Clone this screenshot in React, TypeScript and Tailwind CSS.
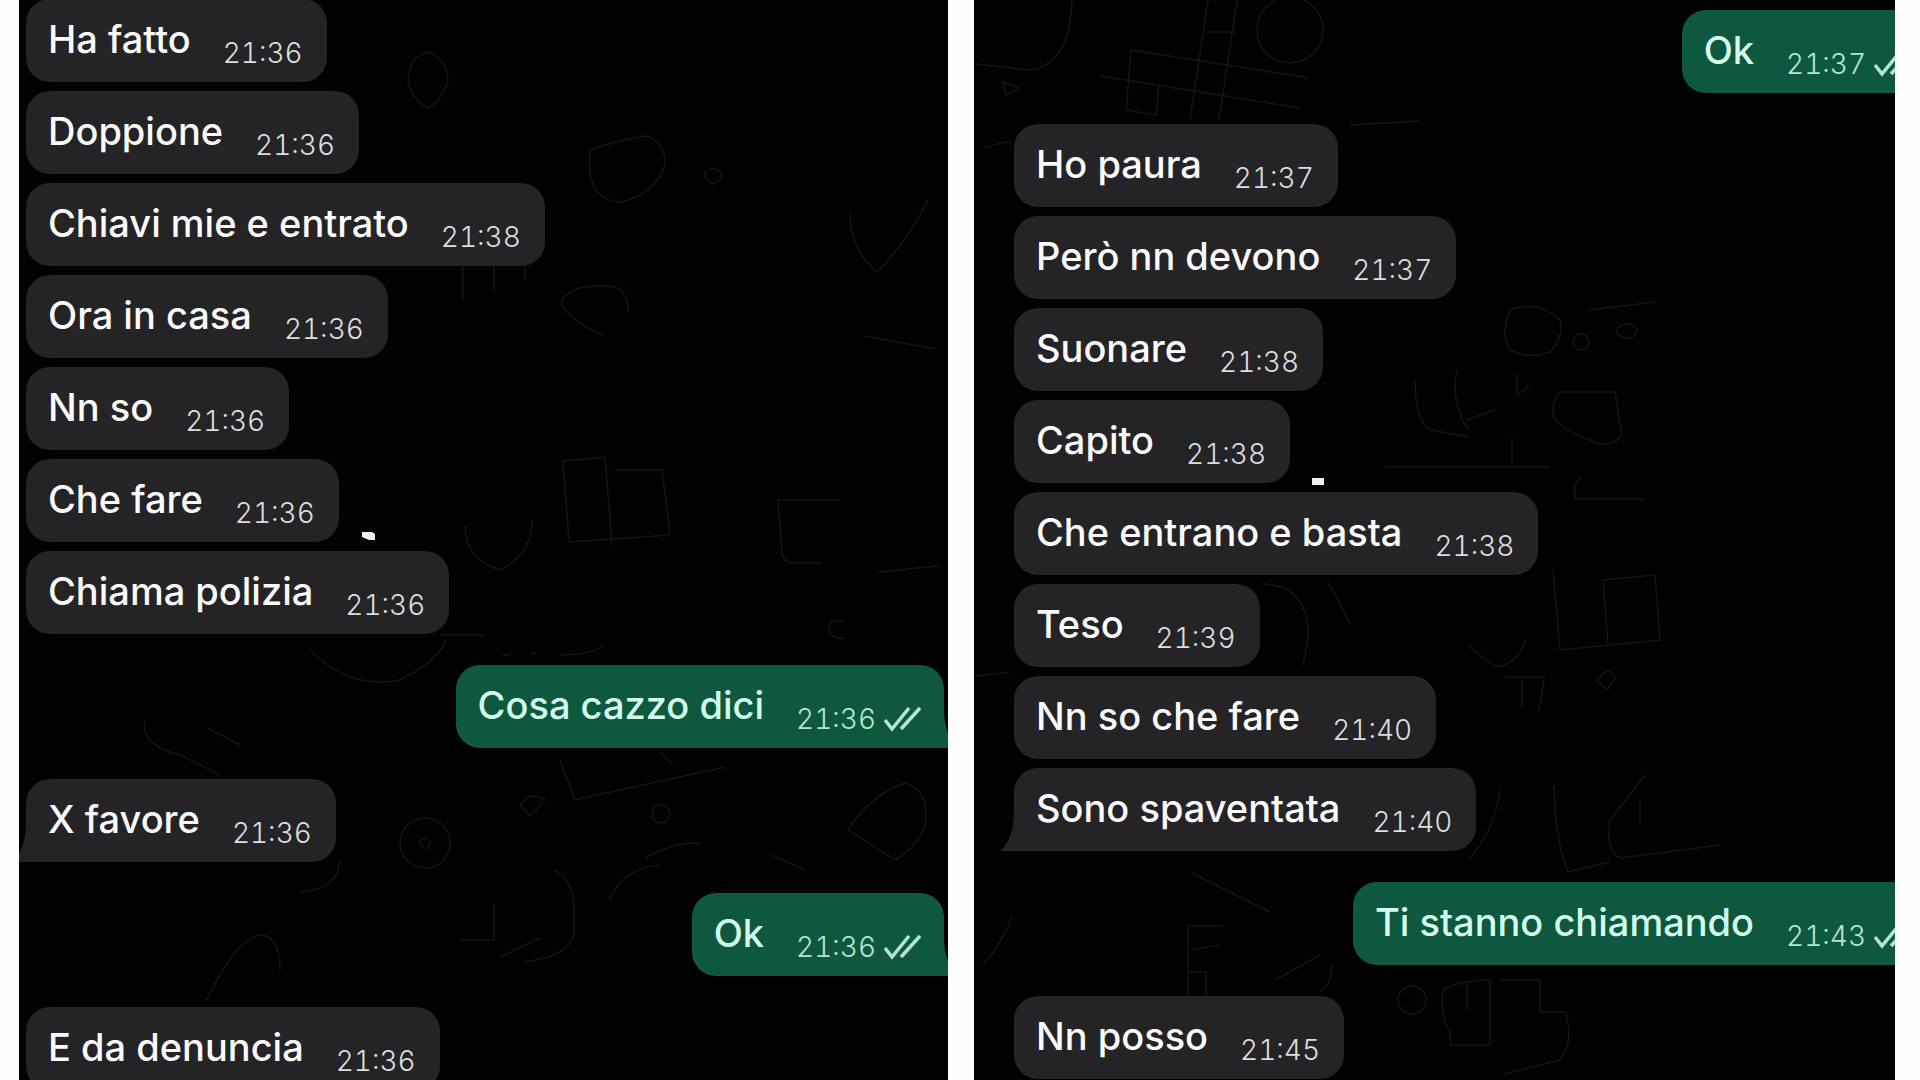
import clsx from 'clsx';

type Message = {
  text: string;
  time: string;
  sent?: boolean;
  tail?: boolean;
};

const firstChat: Message[] = [
  { text: 'Ha fatto', time: '21:36' },
  { text: 'Doppione', time: '21:36' },
  { text: 'Chiavi mie e entrato', time: '21:38' },
  { text: 'Ora in casa', time: '21:36' },
  { text: 'Nn so', time: '21:36' },
  { text: 'Che fare', time: '21:36' },
  { text: 'Chiama polizia', time: '21:36' },
  { text: 'Cosa cazzo dici', time: '21:36', sent: true, tail: true },
  { text: 'X favore', time: '21:36', tail: true },
  { text: 'Ok', time: '21:36', sent: true, tail: true },
  { text: 'E da denuncia', time: '21:36' },
];

const secondChat: Message[] = [
  { text: 'Ok', time: '21:37', sent: true },
  { text: 'Ho paura', time: '21:37' },
  { text: 'Però nn devono', time: '21:37' },
  { text: 'Suonare', time: '21:38' },
  { text: 'Capito', time: '21:38' },
  { text: 'Che entrano e basta', time: '21:38' },
  { text: 'Teso', time: '21:39' },
  { text: 'Nn so che fare', time: '21:40' },
  { text: 'Sono spaventata', time: '21:40', tail: true },
  { text: 'Ti stanno chiamando', time: '21:43', sent: true },
  { text: 'Nn posso', time: '21:45' },
];

const firstDoodles = [
  'M590 150Q620 140 645 136Q665 140 665 165Q655 195 620 202Q585 200 590 150',
  'M628 312Q628 292 615 287Q600 284 580 288Q560 295 562 305Q575 325 605 335',
  'M850 210Q850 250 877 272Q905 245 928 200',
  'M865 336L935 349M878 572L938 566',
  'M563 461L605 457L612 545M563 461L569 542L670 535L662 470H615',
  'M840 500H778L782 555Q785 563 795 563H822',
  'M845 621Q828 618 829 630Q832 640 845 638',
  'M408 80Q410 55 428 52Q448 60 448 82Q440 102 428 108Q410 98 408 80',
  'M463 265V300M494 265V290M525 265V280',
  'M465 525Q465 560 500 570Q532 555 532 520',
  'M310 650Q350 690 400 680Q440 660 445 640M440 635H485',
  'M503 655H511M530 653H536M560 655Q590 655 605 645',
  'M145 720Q140 745 180 755L220 775M208 728L240 745',
  'M400 843a25 25 0 1 0 50 0a25 25 0 1 0 -50 0M420 843a5 5 0 1 0 10 0a5 5 0 1 0 -10 0',
  'M340 860Q338 890 300 892M207 1000Q235 940 260 935Q280 935 280 970',
  'M460 940H494V905M555 870Q574 880 574 910V930Q574 955 525 962M500 957L540 938',
  'M560 760L575 800L725 767M660 752L673 765',
  'M848 830Q870 795 905 783Q930 790 925 825Q915 850 895 860L848 830',
  'M645 858Q670 843 700 843M772 855L805 870M610 900Q620 870 660 865',
  'M520 805Q530 790 545 800L530 816Z',
  'M705 172L713 168L721 172L720 180L713 184L706 179Z',
  'M652 814a9 9 0 1 0 18 0a9 9 0 1 0 -18 0',
];

const secondDoodles = [
  'M1131 50L1310 78M1100 76L1300 108M1208 0L1190 120M1237 0L1219 120',
  'M1131 50L1126 110L1156 115L1159 85M1206 32H1235',
  'M1257 30a33 33 0 1 0 66 0a33 33 0 1 0 -66 0',
  'M1072 0Q1070 65 1030 70L975 64M1003 82L1019 88L1006 95Z',
  'M985 148Q1000 142 1012 142M1350 125L1420 121',
  'M1510 310Q1500 335 1510 350Q1530 360 1550 352Q1565 335 1560 320Q1540 300 1510 310',
  'M1573 342a8 8 0 1 0 16 0a8 8 0 1 0 -16 0M1617 331a10 7 0 1 0 20 0a10 7 0 1 0 -20 0',
  'M1415 380Q1415 420 1430 430L1470 437M1457 370Q1450 400 1468 430M1466 420L1495 410',
  'M1517 375V395L1530 385M1512 437V463M1385 467H1550',
  'M1645 499H1575V485L1581 475',
  'M1560 392H1615L1622 435Q1610 450 1590 440Q1560 430 1553 415Q1552 400 1560 392',
  'M1553 570L1560 650L1660 640L1655 575L1603 580L1608 645',
  'M1505 677H1545M1522 677V707M1544 680L1539 710M1596 680L1608 670L1616 678L1607 690Z',
  'M1468 645Q1490 665 1500 667Q1520 660 1525 640M1590 310L1655 302',
  'M1262 584Q1310 585 1308 640L1303 665M1328 583Q1340 600 1350 625',
  'M1645 775L1610 820Q1605 850 1620 858L1720 845M1640 800V825',
  'M1554 785Q1555 840 1568 872L1610 862',
  'M1188 995V926H1223M1190 950L1220 945M1188 972H1206V995',
  'M1192 873L1270 912M1275 980L1320 955M1332 965Q1332 985 1320 992',
  'M1443 990Q1440 1020 1450 1030V1045H1490V980Q1460 980 1443 990',
  'M1500 980H1540V1012H1565Q1575 1040 1560 1060L1505 1074M1467 980V1010',
  'M1398 1000a14 14 0 1 0 28 0a14 14 0 1 0 -28 0',
  'M983 965Q1005 940 1012 915M1500 790Q1495 830 1470 858M975 676L1010 672',
];

const Ticks = () => (
  <svg viewBox="0 0 38 26" className="ml-2 h-[26px] w-[38px] shrink-0" fill="none" stroke="currentColor" strokeWidth="3.5">
    <path d="M1 14L8 23L25 2" />
    <path d="M17 23L36 2" />
  </svg>
);

const Tail = ({ sent }: { sent?: boolean }) => (
  <svg
    viewBox="0 0 40 40"
    className={clsx('absolute bottom-0 h-10 w-10', sent ? '-right-3.5 -scale-x-100 text-[#0e583f]' : '-left-3.5 text-[#242426]')}
    fill="currentColor"
  >
    <path d="M14 0Q14 28 0 40H40V0Z" />
  </svg>
);

const Bubble = ({ message }: { message: Message }) => (
  <div
    className={clsx(
      'relative flex h-[83px] items-start rounded-[24px] pl-[22px] whitespace-nowrap',
      message.sent ? 'bg-[#0e583f] pr-[22px] text-[#d5fdec]' : 'bg-[#242426] pr-[24px] text-[#fafafa]',
    )}
  >
    {message.tail && <Tail sent={message.sent} />}
    <p className="relative pt-[16px] text-[38px] leading-[48px] font-medium">{message.text}</p>
    <div className={clsx('relative ml-8 flex items-center pt-[36px]', message.sent ? 'text-[#b5e6d0]' : 'text-[#dedede]')}>
      <time className="text-[28px] leading-[36px] font-light tabular-nums">{message.time}</time>
      {message.sent && <Ticks />}
    </div>
  </div>
);

const MessageList = ({ messages, className }: { messages: Message[]; className?: string }) => (
  <ol className={clsx('relative flex flex-col', className)}>
    {messages.map((message, index) => {
      const previous = messages[index - 1];
      const sameSide = previous && !previous.sent === !message.sent;
      return (
        <li
          key={index}
          className={clsx('flex', message.sent ? 'justify-end' : 'justify-start', previous && (sameSide ? 'mt-[9px]' : 'mt-[31px]'))}
        >
          <Bubble message={message} />
        </li>
      );
    })}
  </ol>
);

const Wallpaper = ({ viewBox, paths, spark }: { viewBox: string; paths: string[]; spark: string }) => (
  <svg viewBox={viewBox} preserveAspectRatio="xMinYMin slice" className="absolute inset-0 h-full w-full" aria-hidden="true">
    <g fill="none" stroke="#141414" strokeWidth="1.5">
      {paths.map((d) => (
        <path key={d} d={d} />
      ))}
    </g>
    <path d={spark} fill="#f0f0f0" />
  </svg>
);

export default function App() {
  return (
    <main className="grid h-screen grid-cols-[929fr_921fr] gap-[26px] overflow-hidden bg-[#fefefe] pr-[25px] pl-[19px] font-['Inter',sans-serif]">
      <section className="relative overflow-hidden bg-[#020102]">
        <Wallpaper viewBox="19 0 929 1080" paths={firstDoodles} spark="M362 532H372L375 534V540H369L362 537Z" />
        <MessageList messages={firstChat} className="-mt-px pr-1 pl-[7px]" />
      </section>
      <section className="relative overflow-hidden bg-[#020102]">
        <Wallpaper viewBox="974 0 921 1080" paths={secondDoodles} spark="M1312 478H1324V485H1312Z" />
        <MessageList messages={secondChat} className="-mr-[39px] pt-[10px] pl-10" />
      </section>
    </main>
  );
}
